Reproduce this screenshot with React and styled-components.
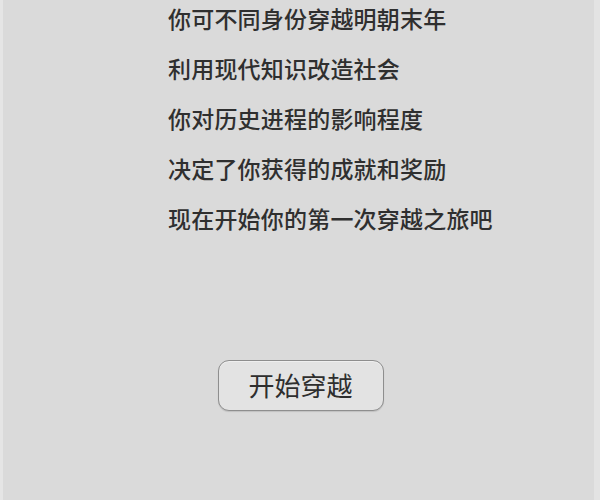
import React from "react";
import styled, { createGlobalStyle } from "styled-components";

const GlobalStyle = createGlobalStyle`
  html, body {
    margin: 0;
    padding: 0;
    background: #dadada;
  }
  body {
    font-family: "Noto Sans CJK SC", "Noto Sans", sans-serif;
  }
`;

const Screen = styled.div`
  width: 600px;
  height: 500px;
  box-sizing: border-box;
  background: #dadada;
  border-left: 3px solid #e5e5e5;
  border-right: 6px solid #e3e3e3;
  display: flex;
  flex-direction: column;
  overflow: hidden;
`;

const Story = styled.div`
  display: flex;
  flex-direction: column;
  gap: 20px;
  padding: 3px 0 0 165px;
`;

const Line = styled.div`
  font-size: 23px;
  font-weight: 500;
  line-height: 30px;
  color: #2f2f2f;
  letter-spacing: 0.2px;
  white-space: nowrap;
`;

const ButtonRow = styled.div`
  display: flex;
  justify-content: center;
  margin-top: 127px;
  padding-left: 4px;
`;

const StartButton = styled.button`
  width: 166px;
  height: 51px;
  box-sizing: border-box;
  border: 1.5px solid #8e8e8e;
  border-radius: 11px;
  background: #e3e3e3;
  box-shadow: 0 1px 1px rgba(0, 0, 0, 0.12), inset 0 1px 0 #efefef;
  color: #2e2e2e;
  font-family: "Noto Sans CJK SC", "Noto Sans", sans-serif;
  font-size: 26px;
  line-height: 1;
  padding: 0 0 2px;
  cursor: pointer;
`;

const lines = [
  "你可不同身份穿越明朝末年",
  "利用现代知识改造社会",
  "你对历史进程的影响程度",
  "决定了你获得的成就和奖励",
  "现在开始你的第一次穿越之旅吧",
];

const App = () => (
  <>
    <GlobalStyle />
    <Screen>
      <Story>
        {lines.map((text, i) => (
          <Line key={`line` + i}>{text}</Line>
        ))}
      </Story>
      <ButtonRow>
        <StartButton>开始穿越</StartButton>
      </ButtonRow>
    </Screen>
  </>
);

export default App;
